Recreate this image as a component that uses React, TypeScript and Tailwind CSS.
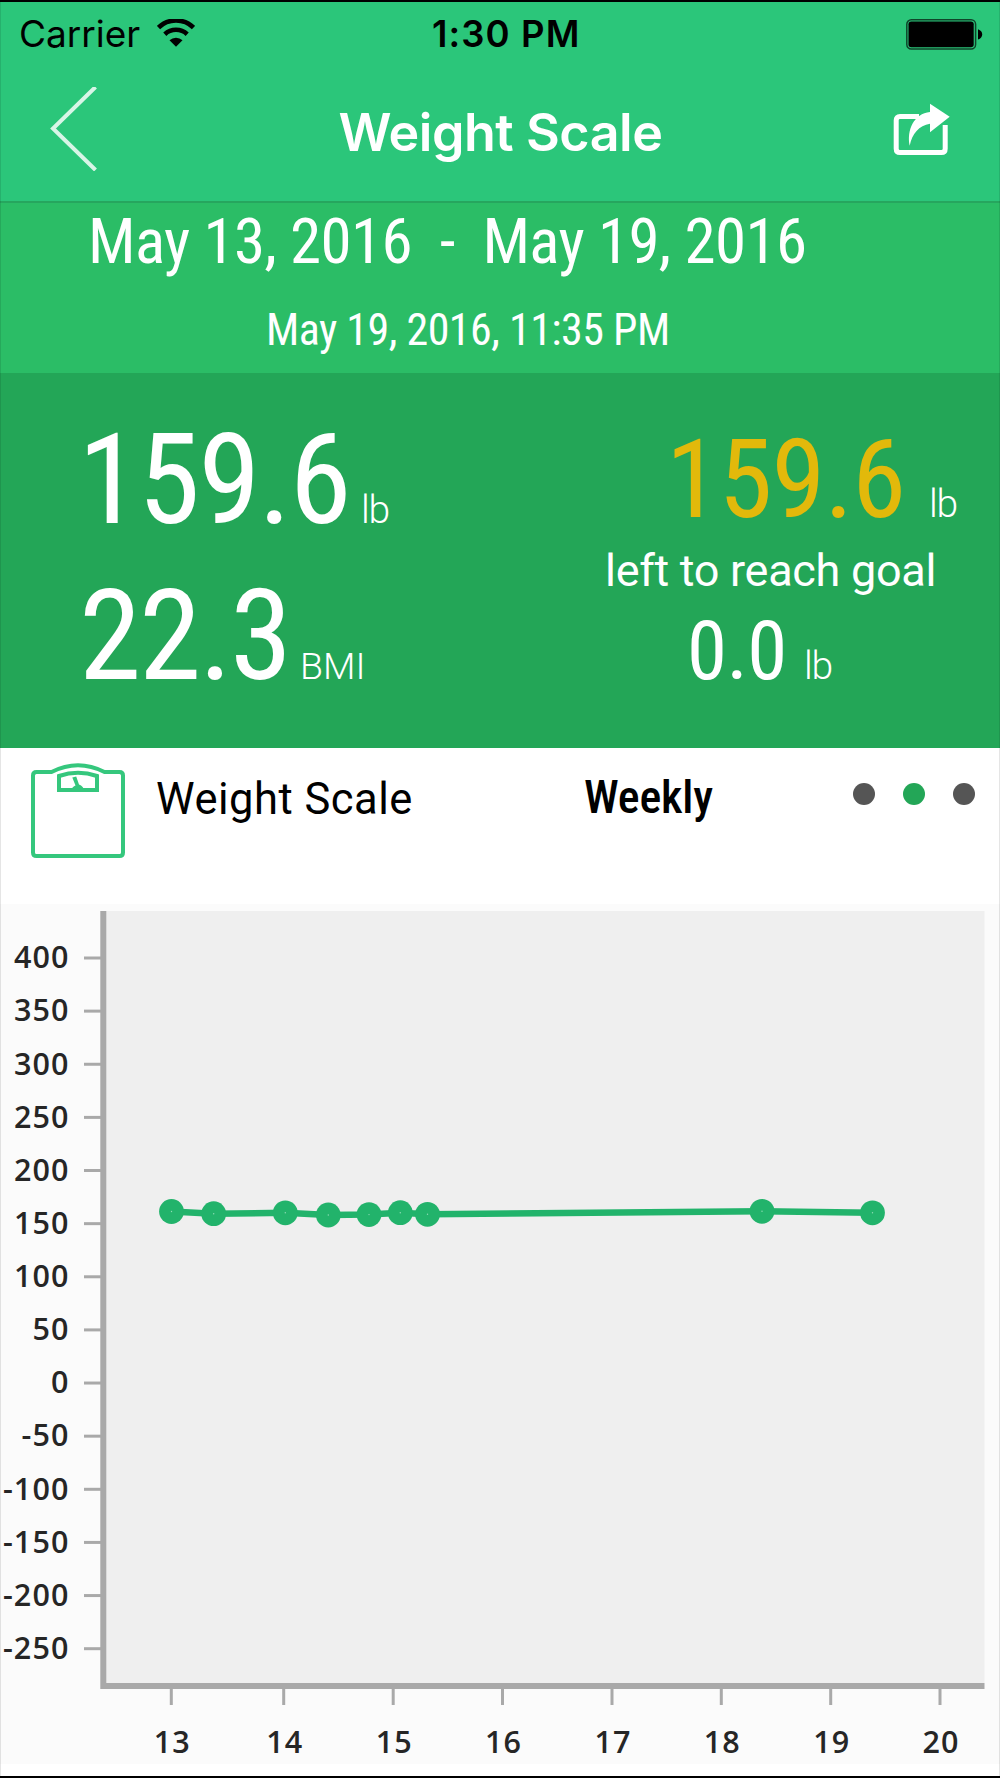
const yLabels = [400, 350, 300, 250, 200, 150, 100, 50, 0, -50, -100, -150, -200, -250];
const xLabels = [13, 14, 15, 16, 17, 18, 19, 20];
const xTicks = [171.3, 283.7, 393.2, 502.5, 612, 721.3, 830.7, 940];

const readings = [
  { x: 171.5, y: 307.5 },
  { x: 213.7, y: 309.7 },
  { x: 285.3, y: 308.8 },
  { x: 328.3, y: 311 },
  { x: 369, y: 310.6 },
  { x: 400.3, y: 308.7 },
  { x: 427.5, y: 310.3 },
  { x: 762, y: 307.3 },
  { x: 872.5, y: 308.8 },
];

const condensed = "font-['Roboto_Condensed','Roboto',sans-serif] [font-stretch:75%]";

function StatusBar() {
  return (
    <div className="flex h-16 items-center pl-[19px] pr-[17px] text-[37px] leading-none text-black">
      <span className="-mt-px w-[138px] font-normal">Carrier</span>
      <svg className="-mt-[3px] h-7 w-[38px]" viewBox="0 0 38 28">
        <g fill="none" stroke="#000" strokeWidth="4.6">
          <path d="M1.5 8.6a25 25 0 0 1 35 0" />
          <path d="M7.8 15.2a16.5 16.5 0 0 1 22.4 0" />
        </g>
        <path d="M12.5 21.2a9.5 9.5 0 0 1 13 0L19 27.8z" />
      </svg>
      <span className="ml-[237px] text-[36.5px] font-semibold tracking-[1.1px]">1:30 PM</span>
      <svg className="ml-auto h-[31px] w-[77px]" viewBox="0 0 77 31">
        <rect x="0.8" y="0.8" width="68.8" height="29.2" rx="4.5" fill="none" stroke="#000" strokeOpacity="0.65" strokeWidth="1.5" />
        <rect x="2.5" y="2.5" width="65.2" height="25.8" rx="2.8" />
        <path d="M72 10.3c5.6 1.8 5.6 8.4 0 10.2z" />
      </svg>
    </div>
  );
}

function NavBar() {
  return (
    <div className="flex h-[135px] items-start px-[50px] text-white">
      <svg className="mt-[21px] h-[84px] w-[48px]" viewBox="0 0 48 84" fill="none" stroke="#fff" strokeOpacity="0.82" strokeWidth="4">
        <path d="M45.5 0L3 41.5L45.5 83" />
      </svg>
      <h1 className="mt-[41px] grow pl-[10px] text-center text-[52px] leading-[52px] font-semibold tracking-[-0.45px]">Weight Scale</h1>
      <svg className="mt-[37px] h-[53px] w-[57px]" viewBox="0 0 57 53">
        <path d="M26 13.500H7Q3.200 13.500 3.200 17.300V45.700Q3.200 49.500 7 49.500H48.400Q52.200 49.500 52.200 45.700V22" fill="none" stroke="#fff" strokeWidth="5" />
        <path d="M37 0.700L56.700 13.700L37 29.300V20.800C26 22.500 19 31 16.700 42.700C13.500 27 21 10.500 37 9Z" fill="#fff" />
      </svg>
    </div>
  );
}

function DateBand() {
  return (
    <section className={`${condensed} h-[170px] bg-[#2bbd66] whitespace-pre text-white`}>
      <div className="pl-[88px] text-[63px] leading-[77px] tracking-[-0.62px]">May 13, 2016  -  May 19, 2016</div>
      <div className="pl-[266px] text-[44px] leading-[101px] tracking-[-0.52px]">May 19, 2016, 11:35 PM</div>
    </section>
  );
}

function Stats() {
  return (
    <section className="flex h-[375px] bg-[#23a657] font-['Roboto',sans-serif] text-white">
      <div className="w-[600px] pt-11">
        <div className="flex items-baseline pl-[78px]">
          <span className={`${condensed} w-[283px] text-[126px] leading-[126px] tracking-[-2.1px]`}>159.6</span>
          <span className="text-[39px] leading-none font-light tracking-[-1.2px]">lb</span>
        </div>
        <div className="mt-[30px] flex items-baseline pl-[79px]">
          <span className={`${condensed} w-[221px] text-[126px] leading-[126px] tracking-[-2.2px]`}>22.3</span>
          <span className="text-[37.500px] leading-none font-light">BMI</span>
        </div>
      </div>
      <div className="pt-[52px]">
        <div className="flex items-baseline pl-[66px]">
          <span className={`${condensed} w-[263px] text-[109px] leading-[110px] tracking-[-1px] text-[#e2b90b]`}>159.6</span>
          <span className="text-[39px] leading-none font-light tracking-[-1.2px]">lb</span>
        </div>
        <div className="mt-[11px] pl-[5px] text-[45px] leading-[50px] tracking-[-0.3px]">left to reach goal</div>
        <div className="mt-[16px] flex items-baseline pl-[87px]">
          <span className={`${condensed} w-[117px] text-[81px] leading-[80px] tracking-[-0.5px]`}>0.0</span>
          <span className="text-[39px] leading-none font-light tracking-[-1.2px]">lb</span>
        </div>
      </div>
    </section>
  );
}

function ChartHeader() {
  return (
    <section className="flex h-[156px] items-start bg-white pl-[31px] font-['Roboto',sans-serif] text-black">
      <svg className="mt-[15px] h-[96px] w-[95px]" viewBox="0 0 95 96" fill="none" stroke="#35c77d" strokeWidth="4">
        <path d="M20.500 9H5.500Q2 9 2 12.500V89.500Q2 93 5.500 93H88.500Q92 93 92 89.500V12.500Q92 9 88.500 9H73.500Q47 -4.500 20.500 9Z" />
        <path d="M28 13Q47 6.500 66 13V27H28Z" />
        <path d="M41.300 14.500L45.200 13.500L48 21.500Q52.500 23 53.500 28H40Q40.500 24 44.500 22.500Z" fill="#35c77d" stroke="none" />
      </svg>
      <span className="mt-[25px] ml-[30px] w-[428px] text-[43.500px] leading-[54px] tracking-[0.5px]">Weight Scale</span>
      <span className={`${condensed} mt-[22px] w-[269px] text-[46px] leading-[54px] font-medium tracking-[-0.2px]`}>Weekly</span>
      <div className="mt-[35px] flex gap-7">
        <span className="size-[22px] rounded-full bg-[#555]" />
        <span className="size-[22px] rounded-full bg-[#23a657]" />
        <span className="size-[22px] rounded-full bg-[#555]" />
      </div>
    </section>
  );
}

function WeightChart() {
  return (
    <svg
      className="block h-[860px] w-full bg-[#fbfbfb] font-['Open_Sans','Noto_Sans',sans-serif] text-[30.500px] font-semibold"
      viewBox="0 0 1000 860"
    >
      <rect x="106" y="7" width="878.500" height="772" fill="#efefef" />
      <path d="M103.300 7V782H984.500" fill="none" stroke="#a9a9a9" strokeWidth="6" />
      {yLabels.map((label, i) => {
        const y = 54 + i * 53.130;
        return (
          <g key={label}>
            <line x1="84" x2="101" y1={y} y2={y} stroke="#a9a9a9" strokeWidth="3" />
            <text x="69.500" y={y + 10.300} textAnchor="end" fill="#262626" letterSpacing="1.100">{label}</text>
          </g>
        );
      })}
      {xLabels.map((label, i) => (
        <g key={label}>
          <line x1={xTicks[i]} x2={xTicks[i]} y1="784" y2="801" stroke="#a9a9a9" strokeWidth="3" />
          <text x={xTicks[i] + 1} y="848.600" textAnchor="middle" fill="#262626" letterSpacing="1">{label}</text>
        </g>
      ))}
      <polyline points={readings.map((p) => `${p.x},${p.y}`).join(" ")} fill="none" stroke="#22b36b" strokeWidth="6.500" />
      {readings.map((p) => (
        <g key={p.x}>
          <circle cx={p.x} cy={p.y} r="12.400" fill="#22b36b" />
          <circle cx={p.x} cy={p.y} r="0.700" fill="#8fdcb5" />
        </g>
      ))}
    </svg>
  );
}

export default function App() {
  return (
    <main className="relative h-[1778px] w-[1000px] overflow-hidden border-y-2 border-black bg-white">
      <header className="h-[201px] border-b-2 border-[#26a65e] bg-[#2bc67a] font-['Inter',sans-serif]">
        <StatusBar />
        <NavBar />
      </header>
      <DateBand />
      <Stats />
      <ChartHeader />
      <WeightChart />
      {/* hairline frame on both sides */}
      <div className="pointer-events-none absolute inset-0 border-x border-black/10" />
    </main>
  );
}
